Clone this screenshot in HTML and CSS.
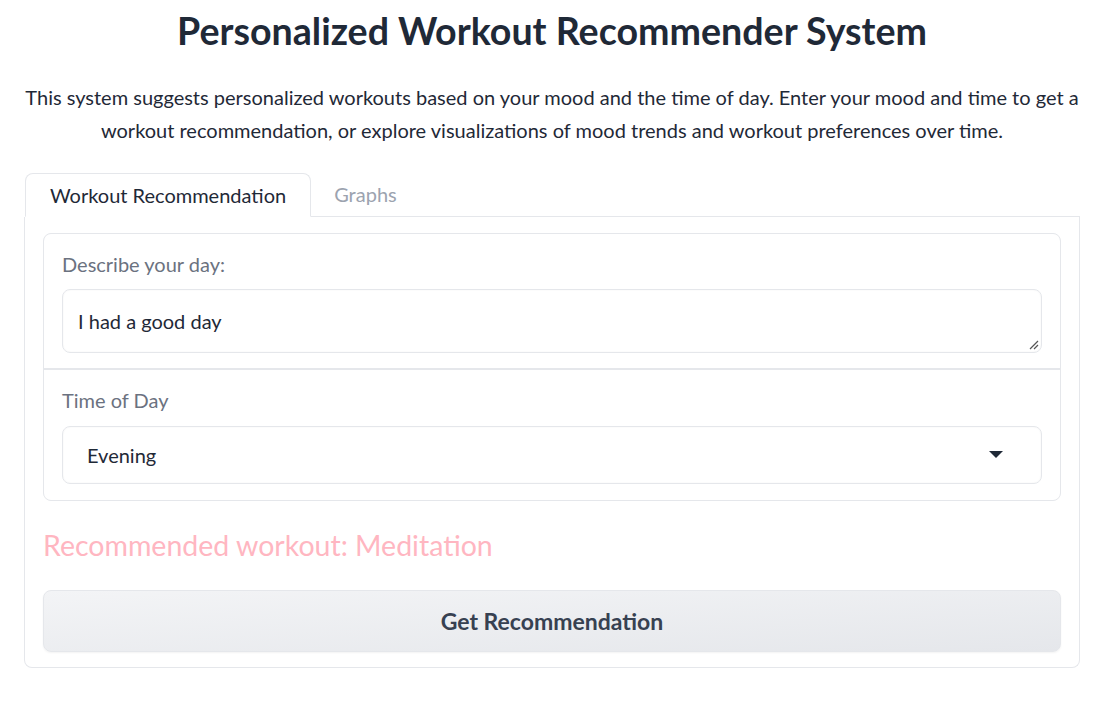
FILE: index.html
```html
<!DOCTYPE html>
<html lang="en">
<head>
<meta charset="utf-8">
<title>Personalized Workout Recommender System</title>
<link rel="stylesheet" href="styles.css">
</head>
<body>
<div class="app">
  <h1 class="title">Personalized Workout Recommender System</h1>
  <p class="desc">This system suggests personalized workouts based on your mood and the time of day. Enter your mood and time to get a workout recommendation, or explore visualizations of mood trends and workout preferences over time.</p>

  <div class="tabs">
    <div class="tab-nav">
      <div class="tab selected">Workout Recommendation</div>
      <div class="tab">Graphs</div>
      <div class="tab-fill"></div>
    </div>
    <div class="panel">
      <div class="form">
        <div class="block">
          <div class="label">Describe your day:</div>
          <div class="textarea">I had a good day
            <svg class="resize" width="10" height="10" viewBox="0 0 10 10"><path d="M1 9 L9 1 M5 9 L9 5" stroke="#555" stroke-width="1.2" fill="none"/></svg>
          </div>
        </div>
        <div class="block">
          <div class="label">Time of Day</div>
          <div class="dropdown">
            <span>Evening</span>
            <svg class="caret" width="14" height="8" viewBox="0 0 14 8"><path d="M0 0 H14 L7 7 Z" fill="#1f2937"/></svg>
          </div>
        </div>
      </div>
      <div class="result">Recommended workout: Meditation</div>
      <div class="button">Get Recommendation</div>
    </div>
  </div>
</div>
</body>
</html>
```
FILE: styles.css
```css
* { box-sizing: border-box; }
body {
  margin: 0;
  background: #ffffff;
  font-family: "Lato", "Open Sans", sans-serif;
  color: #1f2937;
}
.app {
  width: 1056px;
  margin-left: 24px;
  display: flex;
  flex-direction: column;
}
.title {
  margin: 9px 0 0;
  text-align: center;
  font-size: 37.6px;
  line-height: 44px;
  font-weight: 700;
  color: #1f2937;
}
.desc {
  margin: 28px 0 0;
  text-align: center;
  font-size: 20px;
  line-height: 33px;
  color: #1f2937;
}
.tabs {
  margin-top: 26px;
}
.tab-nav {
  display: flex;
  height: 44px;
}
.tab {
  padding: 0 23px;
  font-size: 20px;
  line-height: 43px;
  color: #9ca3af;
  border-bottom: 1px solid #e5e7eb;
}
.tab.selected {
  margin-left: 1px;
  padding: 0 24px;
  color: #1f2937;
  border: 1px solid #e5e7eb;
  border-bottom: 1px solid #ffffff;
  border-radius: 8px 8px 0 0;
}
.tab-fill {
  flex: 1;
  border-bottom: 1px solid #e5e7eb;
}
.panel {
  border: 1px solid #e5e7eb;
  border-top: none;
  border-radius: 0 0 8px 8px;
  padding: 16px 18px 15px;
  display: flex;
  flex-direction: column;
  gap: 16px;
}
.form {
  border: 1px solid #e5e7eb;
  border-radius: 8px;
  background: #e5e7eb;
  display: flex;
  flex-direction: column;
  gap: 2px;
  overflow: hidden;
}
.block {
  background: #ffffff;
  padding: 18px 18px 15px;
  display: flex;
  flex-direction: column;
  gap: 12px;
}
.block + .block {
  gap: 13px;
  padding-bottom: 16px;
}
.label {
  font-size: 20px;
  line-height: 25px;
  color: #6b7280;
}
.textarea {
  position: relative;
  height: 64px;
  border: 1px solid #e5e7eb;
  border-radius: 8px;
  box-shadow: inset 0 0 2px rgba(0,0,0,0.06);
  padding: 0 15px;
  font-size: 20px;
  line-height: 62px;
  color: #1f2937;
}
.resize {
  position: absolute;
  right: 2px;
  bottom: 2px;
}
.dropdown {
  height: 58px;
  border: 1px solid #e5e7eb;
  border-radius: 8px;
  box-shadow: inset 0 0 2px rgba(0,0,0,0.06);
  padding: 0 38px 0 24px;
  display: flex;
  align-items: center;
  justify-content: space-between;
  font-size: 20px;
  color: #1f2937;
}
.result {
  padding: 11px 0 12px;
  font-size: 28.5px;
  line-height: 34px;
  color: #ffb6c1;
}
.button {
  height: 62px;
  border: 1px solid #e5e7eb;
  border-radius: 8px;
  background: linear-gradient(to bottom right, #f3f4f6, #e5e7eb);
  box-shadow: 0 1px 2px rgba(0,0,0,0.05);
  display: flex;
  align-items: center;
  justify-content: center;
  font-size: 23px;
  font-weight: 700;
  color: #374151;
}
```
